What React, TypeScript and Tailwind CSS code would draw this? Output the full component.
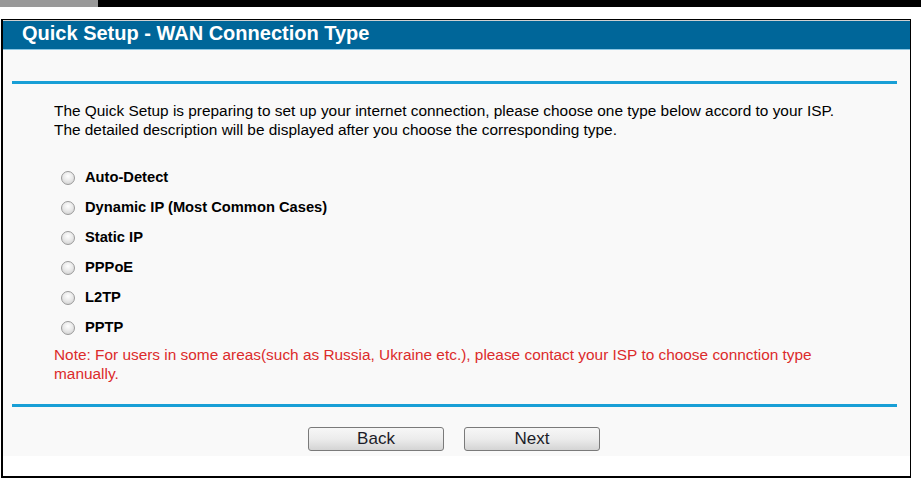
export default function App() {
  const types = [
    'Auto-Detect',
    'Dynamic IP (Most Common Cases)',
    'Static IP',
    'PPPoE',
    'L2TP',
    'PPTP',
  ];

  return (
    <div className="w-[921px] h-[478px] bg-white font-['Liberation_Sans',Arial,sans-serif] text-black">
      {/* top strip */}
      <div className="flex h-[7px]">
        <div className="w-[98px] bg-[#999999]" />
        <div className="flex-1 bg-black" />
      </div>

      {/* frame */}
      <div className="mt-[12px] ml-[1px] w-[910px] h-[459px] border-t border-r border-l-2 border-b-2 border-black flex flex-col">
        <div className="h-px bg-[#d0d0d0]" />
        <div className="h-[28px] bg-[#006699] pl-[19px] text-[20px] font-bold leading-[25px] text-white">
          Quick Setup - WAN Connection Type
        </div>
        <div className="h-px bg-[#8cc6e3]" />

        <div className="bg-[#f9f9f9] h-[406px] flex flex-col">
          <div className="mt-[31px] ml-[9px] w-[885px] h-[3px] bg-[#189fd6]" />

          <p className="mt-[17px] pl-[51px] text-[15.4px] leading-[19px]">
            The Quick Setup is preparing to set up your internet connection, please choose one type below accord to your ISP.
            <br />
            The detailed description will be displayed after you choose the corresponding type.
          </p>

          <div className="mt-[23px] flex flex-col">
            {types.map((t) => (
              <label key={t} className="h-[30px] flex items-center pl-[58px] gap-[10px]">
                <span className="mt-[2px] w-[14px] h-[14px] rounded-full border border-[#9a9a9a] bg-[radial-gradient(circle_at_50%_35%,#ffffff_0%,#e8e8e8_50%,#c8c8c8_100%)]" />
                <span className="text-[14.7px] font-bold leading-[30px]">{t}</span>
              </label>
            ))}
          </div>

          <p className="mt-[3px] pl-[51px] pr-[60px] text-[15.4px] leading-[19px] text-[#dc2b2b]">
            Note: For users in some areas(such as Russia, Ukraine etc.), please contact your ISP to choose connction type manually.
          </p>

          <div className="mt-[21px] ml-[9px] w-[885px] h-[3px] bg-[#189fd6]" />

          <div className="mt-[20px] flex gap-[20px] pl-[305px]">
            <button className="w-[136px] h-[24px] rounded-[3px] border border-[#7a7a7a] bg-gradient-to-b from-[#f7f7f7] via-[#ececec] to-[#d4d4d4] text-[17px] leading-[22px] text-[#1c1c28]">
              Back
            </button>
            <button className="w-[136px] h-[24px] rounded-[3px] border border-[#7a7a7a] bg-gradient-to-b from-[#f7f7f7] via-[#ececec] to-[#d4d4d4] text-[17px] leading-[22px] text-[#1c1c28]">
              Next
            </button>
          </div>
        </div>
      </div>
    </div>
  );
}
